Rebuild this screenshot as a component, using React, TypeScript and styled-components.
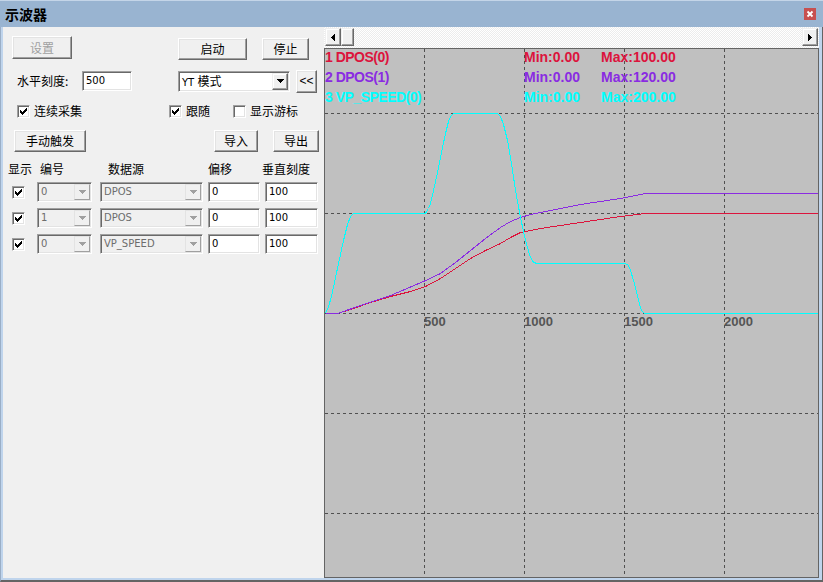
import React from "react";
import styled, { createGlobalStyle } from "styled-components";

const CJK = `"Noto Sans CJK SC", "Liberation Sans", sans-serif`;
const LATIN = `"DejaVu Sans", "Noto Sans CJK SC", sans-serif`;

const GlobalStyle = createGlobalStyle`
  html, body { margin: 0; padding: 0; background: #f0f0f0; }
  body { font-family: ${CJK}; }
`;

const Window = styled.div`
  width: 823px;
  height: 582px;
  display: flex;
  flex-direction: column;
  background: #bfd4ec;
  overflow: hidden;
`;

const TitleBar = styled.div`
  height: 27px;
  flex: none;
  box-sizing: border-box;
  background: #99b4d1;
  border-top: 1px solid #c4d5e8;
  display: flex;
  align-items: center;
  justify-content: space-between;
  padding: 0 7px 0 5px;
`;

const Title = styled.span`
  font: 700 14px/1 ${CJK};
  color: #000;
`;

const CloseBox = styled.div`
  width: 12px;
  height: 12px;
  background: #c75050;
  display: flex;
`;

const Frame = styled.div`
  flex: 1;
  min-height: 0;
  display: flex;
  border-left: 1px solid #9aaec6;
  border-right: 1px solid #646464;
  border-bottom: 2px solid #646464;
  padding: 0 3px 2px 2px;
`;

const Panel = styled.div`
  width: 321px;
  flex: none;
  background: #f0f0f0;
  display: flex;
  flex-direction: column;
`;

const Row = styled.div<{ $mt: number; $h: number; $align?: string }>`
  display: flex;
  align-items: ${(p) => p.$align ?? "center"};
  margin-top: ${(p) => p.$mt}px;
  height: ${(p) => p.$h}px;
`;

const Btn = styled.div<{ $w: number; $h?: number; $ml?: number; $mt?: number; $off?: boolean }>`
  box-sizing: border-box;
  flex: none;
  width: ${(p) => p.$w}px;
  height: ${(p) => p.$h ?? 22}px;
  margin: ${(p) => p.$mt ?? 0}px 0 0 ${(p) => p.$ml ?? 0}px;
  background: #f0f0f0;
  border: 1px solid;
  border-color: #ffffff #696969 #696969 #ffffff;
  box-shadow: inset -1px -1px #a0a0a0, inset 1px 1px #e3e3e3;
  font: 12px/1 ${CJK};
  color: ${(p) => (p.$off ? "#a0a0a0" : "#000")};
  display: flex;
  align-items: center;
  justify-content: center;
`;

const Label = styled.span<{ $w?: number; $ml?: number }>`
  flex: none;
  width: ${(p) => (p.$w ? `${p.$w}px` : "auto")};
  margin-left: ${(p) => p.$ml ?? 0}px;
  font: 12px/1 ${CJK};
  color: #000;
  white-space: nowrap;
`;

const Field = styled.div<{ $w: number; $h?: number; $ml?: number; $off?: boolean }>`
  box-sizing: border-box;
  flex: none;
  width: ${(p) => p.$w}px;
  height: ${(p) => p.$h ?? 20}px;
  margin-left: ${(p) => p.$ml ?? 0}px;
  background: ${(p) => (p.$off ? "#f0f0f0" : "#fff")};
  border: 1px solid;
  border-color: #a0a0a0 #fff #fff #a0a0a0;
  box-shadow: inset 1px 1px #696969, inset -1px -1px #e3e3e3;
  padding: 1px 1px 1px 3px;
  display: flex;
  align-items: center;
  font: 10px/1 ${LATIN};
  color: ${(p) => (p.$off ? "#6d6d6d" : "#000")};
`;

const FieldText = styled.span`
  flex: 1;
  white-space: nowrap;
`;

const Cjk = styled.span`
  font: 12px/1 ${CJK};
`;

const DropBtn = styled.div<{ $off?: boolean }>`
  box-sizing: border-box;
  flex: none;
  width: 16px;
  height: 100%;
  background: #f0f0f0;
  border: 1px solid;
  border-color: ${(p) => (p.$off ? "#e3e3e3 #a0a0a0 #a0a0a0 #e3e3e3" : "#f0f0f0 #696969 #696969 #f0f0f0")};
  box-shadow: ${(p) => (p.$off ? "none" : "inset -1px -1px #a0a0a0, inset 1px 1px #fff")};
  display: flex;
  align-items: center;
  justify-content: center;
`;

const CheckWrap = styled.div<{ $ml?: number }>`
  display: flex;
  align-items: center;
  gap: 4px;
  margin-left: ${(p) => p.$ml ?? 0}px;
  flex: none;
`;

const Box = styled.div`
  box-sizing: border-box;
  width: 13px;
  height: 13px;
  flex: none;
  background: #fff;
  border: 1px solid;
  border-color: #a0a0a0 #fff #fff #a0a0a0;
  box-shadow: inset 1px 1px #696969, inset -1px -1px #e3e3e3;
  display: flex;
  align-items: center;
  justify-content: center;
`;

const Table = styled.div`
  margin-top: 9px;
  margin-left: 5px;
  display: grid;
  grid-template-columns: 29px 63px 108px 57px 53px;
  grid-template-rows: 15px repeat(3, 20px);
  row-gap: 6px;
  align-items: center;
`;

const Head = styled.span<{ $shift?: number }>`
  font: 12px/1 ${CJK};
  color: #000;
  margin-left: ${(p) => p.$shift ?? 0}px;
  white-space: nowrap;
`;

const CellCheck = styled.div`
  margin-left: 4px;
`;

const ChartPane = styled.div`
  flex: 1;
  display: flex;
  flex-direction: column;
  min-width: 0;
`;

const ScrollBar = styled.div`
  height: 21px;
  flex: none;
  box-sizing: border-box;
  padding: 1px 1px 2px 1px;
  display: flex;
  background: repeating-conic-gradient(#ffffff 0% 25%, #ececec 0% 50%) 0 0 / 2px 2px;
`;

const ScrollBtn = styled.div<{ $w: number; $push?: boolean }>`
  box-sizing: border-box;
  width: ${(p) => p.$w}px;
  height: 100%;
  flex: none;
  margin-left: ${(p) => (p.$push ? "auto" : "0")};
  background: #f0f0f0;
  border: 1px solid;
  border-color: #f0f0f0 #696969 #696969 #f0f0f0;
  box-shadow: inset -1px -1px #a0a0a0, inset 1px 1px #fff;
  display: flex;
  align-items: center;
  justify-content: center;
`;

const Plot = styled.div`
  flex: 1;
  box-sizing: border-box;
  border: 1px solid #646464;
  background: #c0c0c0;
  display: flex;
`;

const CheckMark = () => (
  <svg width="7" height="7" viewBox="0 0 7 7" shapeRendering="crispEdges">
    <g fill="#000">
      <rect x="6" y="0" width="1" height="1" />
      <rect x="5" y="1" width="2" height="1" />
      <rect x="0" y="2" width="1" height="1" />
      <rect x="4" y="2" width="3" height="1" />
      <rect x="0" y="3" width="2" height="1" />
      <rect x="3" y="3" width="3" height="1" />
      <rect x="0" y="4" width="5" height="1" />
      <rect x="1" y="5" width="3" height="1" />
      <rect x="2" y="6" width="1" height="1" />
    </g>
  </svg>
);

const DownArrow = ({ color }: { color: string }) => (
  <svg width="7" height="4" viewBox="0 0 7 4" shapeRendering="crispEdges">
    <path d="M0 0h7v1h-1v1h-1v1h-1v1h-1v-1h-1v-1h-1v-1h-1z" fill={color} />
  </svg>
);

const SideArrow = ({ dir }: { dir: "left" | "right" }) => (
  <svg width="4" height="7" viewBox="0 0 4 7" shapeRendering="crispEdges">
    <path
      d={dir === "left" ? "M3 0h1v7h-1v-1h-1v-1h-1v-1h-1v-1h1v-1h1v-1h1z" : "M0 0h1v1h1v1h1v1h1v1h-1v1h-1v1h-1v1h-1z"}
      fill="#000"
    />
  </svg>
);

const CheckBox = ({ label, checked, ml }: { label?: string; checked: boolean; ml?: number }) => (
  <CheckWrap $ml={ml}>
    <Box>{checked && <CheckMark />}</Box>
    {label && <Label>{label}</Label>}
  </CheckWrap>
);

const Combo = ({ text, w, h, ml, off }: { text: React.ReactNode; w: number; h?: number; ml?: number; off?: boolean }) => (
  <Field $w={w} $h={h} $ml={ml} $off={off}>
    <FieldText>{text}</FieldText>
    <DropBtn $off={off}>
      <DownArrow color={off ? "#a0a0a0" : "#000"} />
    </DropBtn>
  </Field>
);

const channels = [
  { on: true, num: "0", src: "DPOS", offset: "0", scale: "100" },
  { on: true, num: "1", src: "DPOS", offset: "0", scale: "100" },
  { on: true, num: "0", src: "VP_SPEED", offset: "0", scale: "100" },
];

// chart coordinates are taken from the window, shifted into the plot
const OX = 325;
const OY = 49;
const toPts = (a: number[][]) => a.map(([x, y]) => `${x - OX + 0.5},${y - OY + 0.5}`).join(" ");

const speed = [
  [325, 313], [328, 306], [331, 296], [334, 282], [338, 263], [343, 240], [347, 224], [350, 216], [353, 213],
  [425, 213], [428, 208], [430, 203], [433, 190], [437, 172], [441, 152], [445, 133], [448, 121], [450, 116], [453, 113],
  [497, 113], [500, 116], [503, 124], [507, 140], [511, 163], [515, 190], [520, 217], [525, 240], [529, 254], [532, 261], [536, 263],
  [625, 263], [628, 265], [630, 270], [633, 280], [635, 287], [638, 300], [641, 310], [644, 313], [817, 313],
];
const dpos0 = [
  [325, 313], [337, 313], [350, 309], [370, 302], [390, 296], [410, 291], [425, 286], [440, 278], [455, 268], [470, 258],
  [485, 250], [500, 243], [510, 237], [520, 232], [530, 230], [540, 228], [580, 222], [620, 216], [645, 213], [817, 213],
];
const dpos1 = [
  [325, 313], [337, 313], [360, 305], [390, 295], [423, 281], [440, 273], [455, 262], [470, 250], [485, 238], [500, 227],
  [510, 221], [520, 217], [530, 214], [540, 212], [580, 204], [620, 198], [645, 193], [817, 193],
];

const legend = [
  { name: "1 DPOS(0)", min: "Min:0.00", max: "Max:100.00", color: "#dc143c" },
  { name: "2 DPOS(1)", min: "Min:0.00", max: "Max:120.00", color: "#8a2be2" },
  { name: "3 VP_SPEED(0)", min: "Min:0.00", max: "Max:200.00", color: "#00ffff" },
];

const Chart = () => (
  <svg width="493" height="528" viewBox="0 0 493 528" style={{ display: "block" }}>
    <g stroke="#505050" strokeDasharray="3 3" shapeRendering="crispEdges">
      {[99.5, 199.5, 299.5, 399.5].map((x) => (
        <line key={x} x1={x} y1={0} x2={x} y2={528} />
      ))}
      {[64.5, 164.5, 264.5, 364.5, 464.5].map((y) => (
        <line key={y} x1={0} y1={y} x2={493} y2={y} />
      ))}
    </g>
    <g fontFamily="Liberation Sans, Arial, sans-serif" fontWeight="700">
      {legend.map((l, i) => (
        <g key={l.name} fill={l.color} fontSize="14">
          <text x={0} y={13 + i * 20} letterSpacing="-0.5">{l.name}</text>
          <text x={199} y={13 + i * 20}>{l.min}</text>
          <text x={276} y={13 + i * 20}>{l.max}</text>
        </g>
      ))}
      {["500", "1000", "1500", "2000"].map((t, i) => (
        <text key={t} x={99 + i * 100} y={277} fontSize="13" fill="#555">
          {t}
        </text>
      ))}
    </g>
    <g fill="none" strokeWidth="1" shapeRendering="crispEdges">
      <polyline points={toPts(dpos0)} stroke="#dc143c" />
      <polyline points={toPts(dpos1)} stroke="#8a2be2" />
      <polyline points={toPts(speed)} stroke="#00ffff" />
    </g>
  </svg>
);

export default function App() {
  return (
    <>
      <GlobalStyle />
      <Window>
        <TitleBar>
          <Title>示波器</Title>
          <CloseBox>
            <svg width="12" height="12" viewBox="0 0 12 12">
              <path d="M3.5 3.5l5 5M8.5 3.5l-5 5" stroke="#fff" strokeWidth="1.8" />
            </svg>
          </CloseBox>
        </TitleBar>
        <Frame>
          <Panel>
            <Row $mt={9} $h={25} $align="flex-start">
              <Btn $w={60} $h={23} $ml={9} $off>设置</Btn>
              <Btn $w={69} $ml={106} $mt={2}>启动</Btn>
              <Btn $w={47} $ml={15} $mt={2}>停止</Btn>
            </Row>
            <Row $mt={8} $h={24}>
              <Label $w={65} $ml={14}>水平刻度:</Label>
              <Field $w={50}>500</Field>
              <Combo
                w={112}
                h={21}
                ml={46}
                text={
                  <>
                    YT <Cjk>模式</Cjk>
                  </>
                }
              />
              <Btn $w={21} $h={23} $ml={6}>
                <Label as="span" style={{ fontFamily: "Liberation Sans, sans-serif" }}>&lt;&lt;</Label>
              </Btn>
            </Row>
            <Row $mt={11} $h={14}>
              <CheckBox label="连续采集" checked ml={14} />
              <CheckBox label="跟随" checked ml={87} />
              <CheckBox label="显示游标" checked={false} ml={23} />
            </Row>
            <Row $mt={12} $h={22}>
              <Btn $w={72} $ml={11}>手动触发</Btn>
              <Btn $w={44} $ml={128}>导入</Btn>
              <Btn $w={46} $ml={15}>导出</Btn>
            </Row>
            <Table>
              <Head>显示</Head>
              <Head $shift={3}>编号</Head>
              <Head $shift={8}>数据源</Head>
              <Head>偏移</Head>
              <Head $shift={-3}>垂直刻度</Head>
              {channels.map((c, i) => (
                <React.Fragment key={i}>
                  <CellCheck>
                    <CheckBox checked={c.on} />
                  </CellCheck>
                  <Combo w={55} text={c.num} off />
                  <Combo w={103} text={c.src} off />
                  <Field $w={52}>{c.offset}</Field>
                  <Field $w={53}>{c.scale}</Field>
                </React.Fragment>
              ))}
            </Table>
          </Panel>
          <ChartPane>
            <ScrollBar>
              <ScrollBtn $w={16}>
                <SideArrow dir="left" />
              </ScrollBtn>
              <ScrollBtn $w={13} />
              <ScrollBtn $w={16} $push>
                <SideArrow dir="right" />
              </ScrollBtn>
            </ScrollBar>
            <Plot>
              <Chart />
            </Plot>
          </ChartPane>
        </Frame>
      </Window>
    </>
  );
}
